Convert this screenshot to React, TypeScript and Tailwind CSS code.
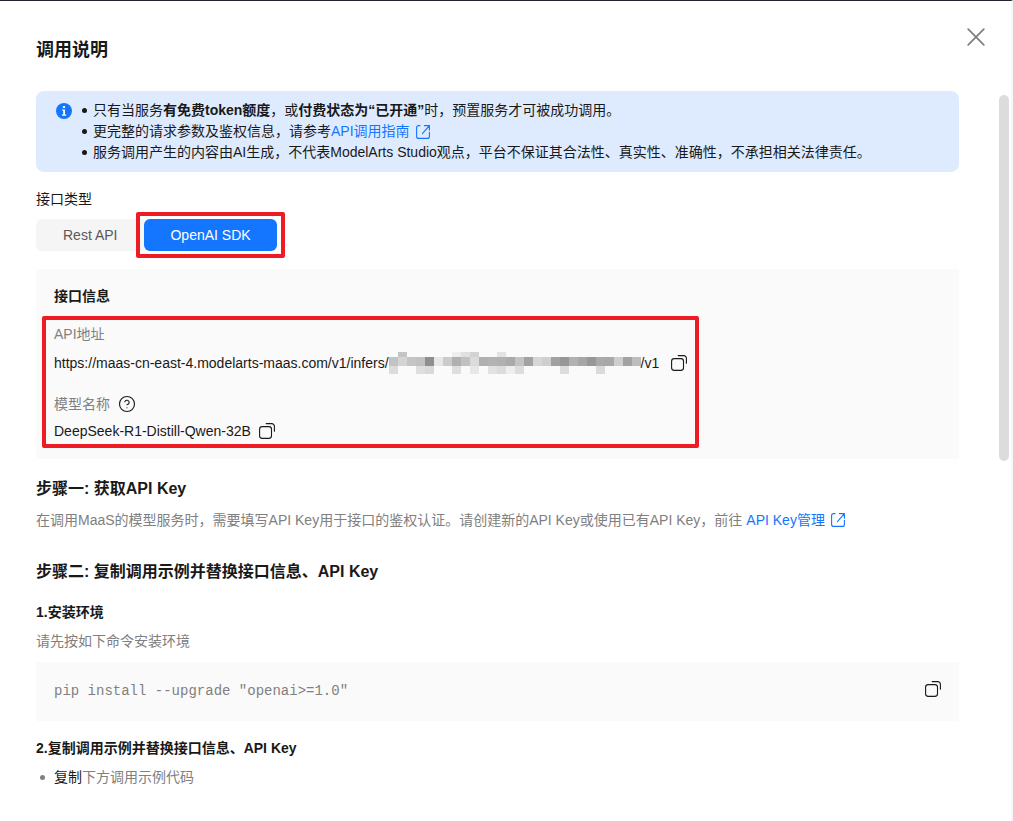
import { useState } from "react"
import { CircleHelp } from "lucide-react"

// Shades of the masked service id, one entry per 9px block
const maskRow = [
  "#c3c3c3", "#d4d4d4", "#c5c5c5", "#c1c1c1", "#8e8e8e", "#e7e7e7", "#cbcbcb",
  "#b0b0b0", "#c1c1c1", "#dbdbdb", "#b0b0b0", "#b3b3b3", "#b1b1b1", "#aaaaaa",
  "#c3c3c3", "#a2a2a2", "#d6d6d6", "#cfcfcf", "#a1a1a1", "#969696", "#b1b1b1",
  "#a6a6a6", "#989898", "#aaaaaa", "#a8a8a8", "#cecece", "#a2a2a2", "#bdbdbd",
]

const maskTop = [
  { col: 1, fill: "#c4c4c4" },
  { col: 7, fill: "#eeeeee" },
  { col: 8, fill: "#e1e1e1" },
  { col: 9, fill: "#d3d3d3" },
  { col: 12, fill: "#e2e2e2" },
]

const maskBottom = [
  { col: 0, fill: "#dcdcdc" },
  { col: 3, fill: "#dedede" },
  { col: 4, fill: "#d9d9d9" },
  { col: 7, fill: "#dedede" },
  { col: 9, fill: "#e7e7e7" },
  { col: 11, fill: "#e2e2e2" },
  { col: 12, fill: "#dcdcdc" },
  { col: 13, fill: "#eeeeee" },
  { col: 14, fill: "#dddddd" },
  { col: 19, fill: "#dcdcdc" },
  { col: 23, fill: "#dadada" },
]

function MaskedId() {
  return (
    <svg width="252" height="22" viewBox="0 0 252 22" shapeRendering="crispEdges" className="shrink-0" aria-hidden="true">
      {maskTop.map((b) => (
        <rect key={b.col} x={b.col * 9} y="0" width="9" height="5" fill={b.fill} />
      ))}
      {maskRow.map((fill, i) => (
        <rect key={i} x={i * 9} y="5" width="9" height="9" fill={fill} />
      ))}
      {maskBottom.map((b) => (
        <rect key={b.col} x={b.col * 9} y="14" width="9" height="8" fill={b.fill} />
      ))}
    </svg>
  )
}

function CopyButton({ label }: { label: string }) {
  return (
    <button type="button" aria-label={label} className="shrink-0 cursor-pointer text-[#191919]">
      <svg width="16" height="16" viewBox="0 0 16 16" fill="none" stroke="currentColor" strokeWidth="1.1" strokeLinecap="round">
        <rect x="0.6" y="3.6" width="11.9" height="11.8" rx="2.6" />
        <path d="M7.2 0.6h5.5a2.7 2.7 0 0 1 2.7 2.7v5" />
      </svg>
    </button>
  )
}

function ExternalIcon() {
  return (
    <svg width="14" height="14" viewBox="0 0 14 14" fill="none" stroke="currentColor" strokeWidth="1.1" strokeLinecap="round" className="shrink-0">
      <path d="M4 0.6H2.6a2 2 0 0 0-2 2v8.8a2 2 0 0 0 2 2h8.8a2 2 0 0 0 2-2V7.2" />
      <path d="M8.4 0.6h5v4.6M13.2 0.8 6.4 8.6" />
    </svg>
  )
}

function Dot() {
  return <span className="mr-1.5 size-[5px] shrink-0 rounded-full bg-current" />
}

export default function App() {
  const [type, setType] = useState("sdk")

  return (
    <div className="min-h-screen border-t border-r-2 border-t-[#25222f] border-r-[#f7f7f7] bg-white font-['Liberation_Sans','Noto_Sans_CJK_SC',sans-serif] text-sm leading-5 text-[#191919]">
      {/* Header */}
      <header className="flex items-start justify-between pt-[26px] pr-[25px] pb-[27px] pl-9">
        <h1 className="mt-[9px] text-lg leading-7 font-bold">调用说明</h1>
        <button type="button" aria-label="关闭" className="cursor-pointer text-[#808080]">
          <svg width="20" height="20" viewBox="0 0 20 20" fill="none" stroke="currentColor" strokeWidth="1.8" strokeLinecap="round">
            <path d="M2.2 2.2l15.6 15.6M17.8 2.2L2.2 17.8" />
          </svg>
        </button>
      </header>

      <div className="flex">
        <main className="min-w-0 flex-1 pl-9">
          {/* Notice */}
          <section className="flex rounded-lg bg-[#deebff] py-[9px] pl-5 leading-[21px]">
            <svg width="16" height="16" viewBox="0 0 16 16" className="mt-[3px] shrink-0" aria-hidden="true">
              <circle cx="8" cy="8" r="8" fill="#1476ff" />
              <rect x="6.9" y="3" width="2.1" height="2" fill="#fff" />
              <path d="M6 6.4h3v5.2h1.2v1.1H6v-1.1h1.2V7.5H6z" fill="#fff" />
            </svg>
            <ul className="ml-2.5">
              <li className="flex items-center">
                <Dot />
                <span>
                  只有当服务<b>有免费token额度</b>，或<b>付费状态为“已开通”</b>时，预置服务才可被成功调用。
                </span>
              </li>
              <li className="flex items-center">
                <Dot />
                更完整的请求参数及鉴权信息，请参考
                <a href="#guide" className="flex items-center gap-1.5 text-[#1476ff]">
                  API调用指南
                  <ExternalIcon />
                </a>
              </li>
              <li className="flex items-center">
                <Dot />
                服务调用产生的内容由AI生成，不代表ModelArts Studio观点，平台不保证其合法性、真实性、准确性，不承担相关法律责任。
              </li>
            </ul>
          </section>

          {/* Interface type */}
          <p className="mt-[17px]">接口类型</p>
          <div className="mt-2.5 flex">
            <button
              type="button"
              onClick={() => setType("rest")}
              aria-pressed={type === "rest"}
              className="h-8 cursor-pointer rounded-l-md bg-[#f5f5f5] px-[27px] text-[#595959]"
            >
              Rest API
            </button>
            <div className="relative">
              <button
                type="button"
                onClick={() => setType("sdk")}
                aria-pressed={type === "sdk"}
                className="h-8 cursor-pointer rounded-md bg-[#1476ff] px-[26px] text-white"
              >
                OpenAI SDK
              </button>
              <div className="pointer-events-none absolute -inset-x-2 -inset-y-[7px] rounded-xs border-4 border-[#ed1c24]" />
            </div>
          </div>

          {/* Interface info */}
          <section className="mt-[18px] bg-[#fafafa] px-[18px] pt-[17px] pb-[18px]">
            <h2 className="font-bold">接口信息</h2>
            <div className="relative mt-[18px] w-fit">
              <div className="pointer-events-none absolute -inset-x-3 -top-2 -bottom-[7px] rounded-xs border-4 border-[#ed1c24]" />
              <p className="text-[#808080]">API地址</p>
              <div className="mt-[9px] flex h-5 items-center">
                <span>https://maas-cn-east-4.modelarts-maas.com/v1/infers/</span>
                <MaskedId />
                <span className="mr-3">/v1</span>
                <CopyButton label="复制API地址" />
              </div>
              <div className="mt-[21px] flex items-center gap-2 text-[#808080]">
                模型名称
                <CircleHelp size={18} strokeWidth={1.5} className="text-[#191919]" />
              </div>
              <div className="mt-[7px] flex items-center gap-2">
                DeepSeek-R1-Distill-Qwen-32B
                <CopyButton label="复制模型名称" />
              </div>
            </div>
          </section>

          {/* Step 1 */}
          <h2 className="mt-[18px] text-base leading-6 font-bold">步骤一: 获取API Key</h2>
          <p className="mt-[9px] flex items-center text-[#808080]">
            在调用MaaS的模型服务时，需要填写API Key用于接口的鉴权认证。请创建新的API Key或使用已有API Key，前往
            <a href="#keys" className="ml-1 flex items-center gap-1.5 text-[#1476ff]">
              API Key管理
              <ExternalIcon />
            </a>
          </p>

          {/* Step 2 */}
          <h2 className="mt-[30px] text-base leading-6 font-bold">步骤二: 复制调用示例并替换接口信息、API Key</h2>
          <h3 className="mt-[18px] font-bold">1.安装环境</h3>
          <p className="mt-[9px] text-[#808080]">请先按如下命令安装环境</p>
          <div className="mt-[11px] flex items-start justify-between bg-[#fafafa] px-[18px] pt-[19px] pb-5">
            <code className="font-['Liberation_Mono',monospace] text-[#808080]">pip install --upgrade "openai&gt;=1.0"</code>
            <CopyButton label="复制命令" />
          </div>
          <h3 className="mt-[17px] font-bold">2.复制调用示例并替换接口信息、API Key</h3>
          <ul className="mt-[9px] text-[#808080]">
            <li className="flex items-center pl-1">
              <Dot />
              <span className="ml-[3px]">
                <span className="text-[#191919]">复制</span>下方调用示例代码
              </span>
            </li>
          </ul>
        </main>

        {/* Scrollbar */}
        <div className="flex w-[52px] shrink-0 justify-end pt-1 pr-0.5">
          <div className="h-[366px] w-2.5 rounded-full bg-[#dcdcdc]" />
        </div>
      </div>
    </div>
  )
}
